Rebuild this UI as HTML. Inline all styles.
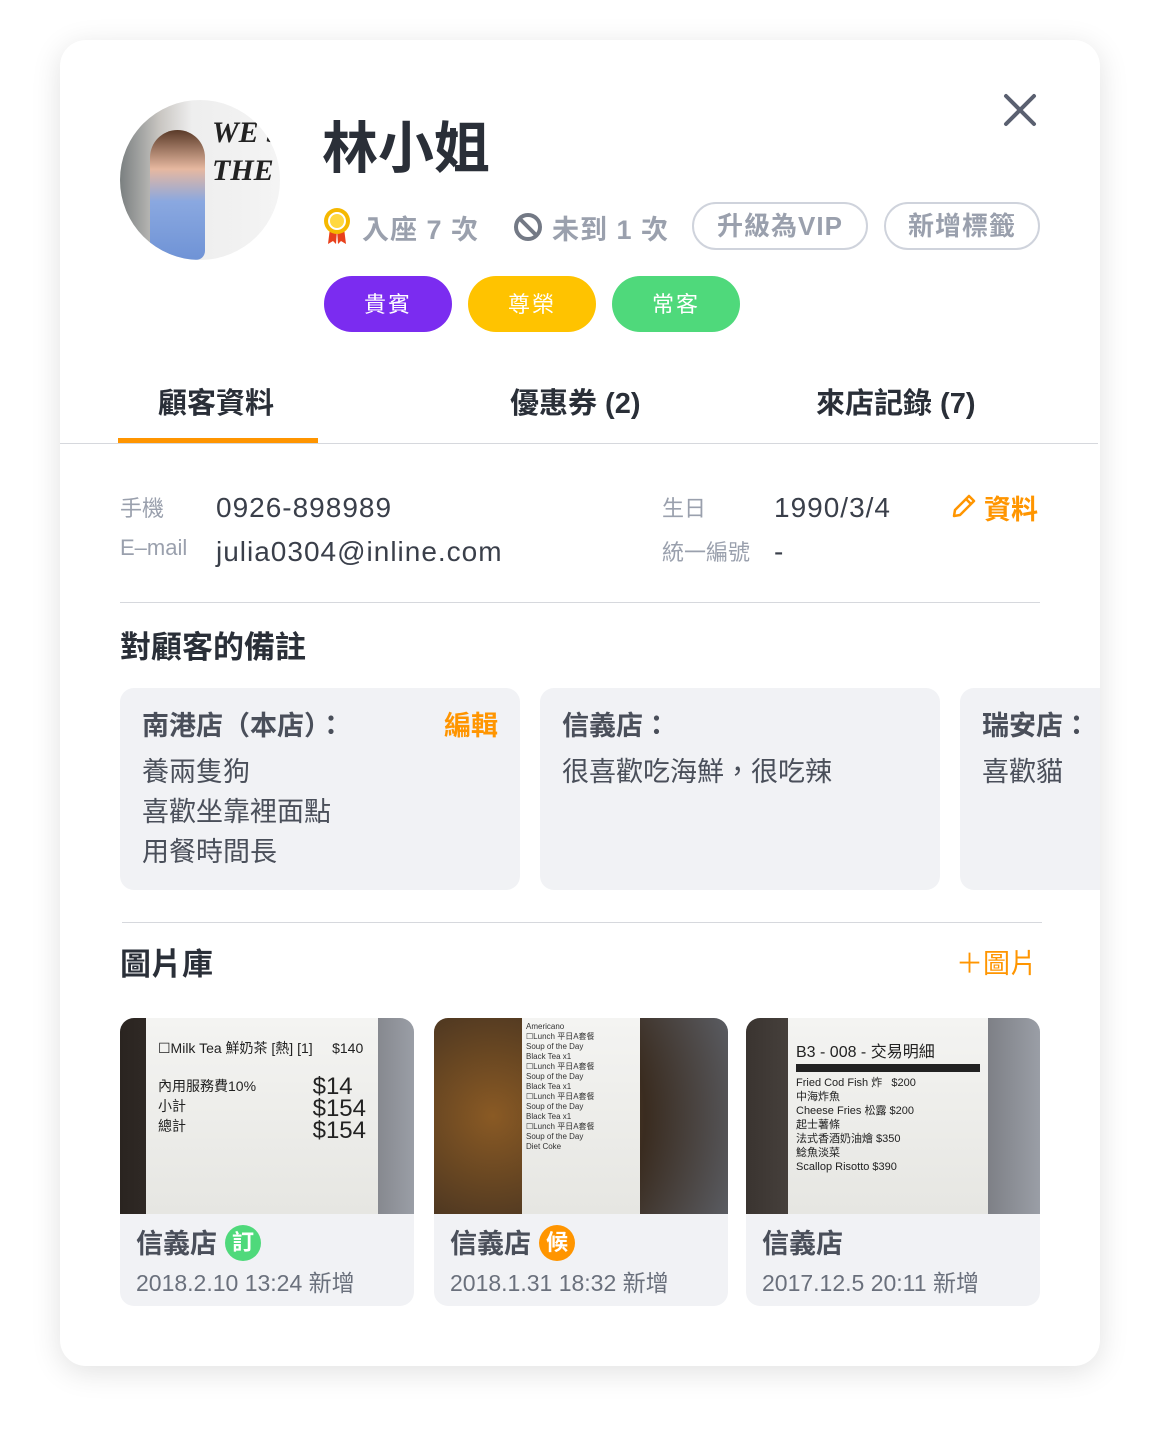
<!DOCTYPE html><html><head><meta charset="utf-8"><style>
*{margin:0;padding:0;box-sizing:border-box}
body{width:1160px;height:1446px;background:#fff;font-family:"Liberation Sans","Noto Sans CJK TC",sans-serif;position:relative;overflow:hidden;color:#2f3540}
.card{position:absolute;left:60px;top:40px;width:1040px;height:1326px;background:#fff;border-radius:26px;box-shadow:0 6px 30px rgba(0,0,0,.12);overflow:hidden}
.a{position:absolute;white-space:nowrap}
.tag{position:absolute;top:236px;height:56px;width:128px;border-radius:28px;color:#fff;font-size:22px;text-align:center;line-height:58px;letter-spacing:2px}
.pill{position:absolute;top:162px;height:48px;border:2px solid #cfd3dc;border-radius:24px;color:#9aa0ad;font-size:26px;line-height:44px;text-align:center;font-weight:bold;letter-spacing:1px}
.lbl{color:#9aa0ad;font-size:22px}
.val{font-size:28px;letter-spacing:1px;color:#3a3f4a}
.note{position:absolute;top:648px;width:400px;height:202px;background:#f1f2f5;border-radius:14px}
.note .h{position:absolute;left:22px;top:16px;font-size:27px;font-weight:bold;color:#4a4f5a}
.note .t{position:absolute;left:22px;top:64px;font-size:27px;line-height:40px;color:#4a4f5a}
.img{position:absolute;top:978px;width:294px;height:288px;background:#f1f2f5;border-radius:14px;overflow:hidden}
.ph{height:196px;position:relative}
.rc{position:absolute;top:0;bottom:0;background:linear-gradient(#f4f4f2,#e6e6e2)}
.cap1{position:absolute;left:16px;top:204px;font-size:27px;font-weight:bold;color:#4a4f5a}
.cap2{position:absolute;left:16px;top:246px;font-size:23px;color:#6a707c}
.bd{display:inline-block;width:36px;height:36px;border-radius:50%;color:#fff;font-size:22px;line-height:36px;text-align:center;vertical-align:3px;margin-left:8px}
</style></head><body>
<div class="card">
<div class="a" style="left:60px;top:60px;width:160px;height:160px;border-radius:50%;overflow:hidden;background:linear-gradient(90deg,#7a7f80 0%,#c9c6c2 25%,#eee 45%,#f4f4f4 100%)">
<div style="position:absolute;left:30px;top:30px;width:55px;height:130px;background:linear-gradient(#5a3a28 0,#e6b8a0 30%,#8aa8e0 55%,#6f93d6 100%);border-radius:30px 30px 10px 10px"></div>
<div style="position:absolute;left:92px;top:14px;font:bold italic 30px 'Liberation Serif';color:#222;line-height:38px">WE SE<br>THE BEST</div></div>
<div class="a" style="left:262px;top:64px;font-size:56px;font-weight:bold;color:#2a2f38">林小姐</div>
<svg class="a" style="left:942px;top:52px" width="36" height="36" viewBox="0 0 36 36"><path d="M4 4L32 32M32 4L4 32" stroke="#5a6070" stroke-width="4" stroke-linecap="round"/></svg>
<svg class="a" style="left:262px;top:166px" width="30" height="40" viewBox="0 0 30 40"><path d="M8 22L6 38L11 35L14 38L15 24Z M22 22L24 38L19 35L16 38L15 24Z" fill="#e8401c"/><circle cx="15" cy="15" r="13" fill="#f5b800"/><circle cx="15" cy="15" r="8" fill="#ffd840" stroke="#fff" stroke-width="2"/></svg>
<div class="a" style="left:302px;top:168px;font-size:27px;color:#9aa0ad;font-weight:bold;letter-spacing:1px">入座 7 次</div>
<svg class="a" style="left:453px;top:172px" width="30" height="30" viewBox="0 0 30 30"><circle cx="15" cy="15" r="12" fill="none" stroke="#737985" stroke-width="4"/><path d="M7 7L23 23" stroke="#737985" stroke-width="4"/></svg>
<div class="a" style="left:492px;top:168px;font-size:27px;color:#9aa0ad;font-weight:bold;letter-spacing:1px">未到 1 次</div>
<div class="pill" style="left:632px;width:176px">升級為VIP</div>
<div class="pill" style="left:824px;width:156px">新增標籤</div>
<div class="tag" style="left:264px;background:#7b2cf0">貴賓</div>
<div class="tag" style="left:408px;background:#ffc300">尊榮</div>
<div class="tag" style="left:552px;background:#4fd97b">常客</div>
<div class="a" style="left:98px;top:340px;font-size:29px;font-weight:bold;color:#2a2f38">顧客資料</div>
<div class="a" style="left:450px;top:340px;font-size:29px;font-weight:bold;color:#2a2f38">優惠券 (2)</div>
<div class="a" style="left:756px;top:340px;font-size:29px;font-weight:bold;color:#2a2f38">來店記錄 (7)</div>
<div class="a" style="left:58px;top:398px;width:200px;height:5px;background:#ff9500"></div>
<div class="a" style="left:0;top:403px;width:1038px;height:1px;background:#d6d8dd"></div>
<div class="a lbl" style="left:60px;top:451px">手機</div>
<div class="a val" style="left:156px;top:452px">0926-898989</div>
<div class="a lbl" style="left:60px;top:495px">E–mail</div>
<div class="a val" style="left:156px;top:496px">julia0304@inline.com</div>
<div class="a lbl" style="left:602px;top:451px">生日</div>
<div class="a val" style="left:714px;top:452px">1990/3/4</div>
<div class="a lbl" style="left:602px;top:495px">統一編號</div>
<div class="a val" style="left:714px;top:496px">-</div>
<svg class="a" style="left:890px;top:452px" width="28" height="28" viewBox="0 0 28 28"><path d="M4 24L5 18L19 4L24 9L10 23Z M16 7L21 12" fill="none" stroke="#ff9500" stroke-width="2.5" stroke-linejoin="round"/></svg>
<div class="a" style="left:924px;top:448px;font-size:27px;color:#ff9500;font-weight:bold">資料</div>
<div class="a" style="left:60px;top:562px;width:920px;height:1px;background:#d6d8dd"></div>
<div class="a" style="left:60px;top:582px;font-size:31px;font-weight:bold;color:#2a2f38">對顧客的備註</div>
<div class="note" style="left:60px"><div class="h">南港店（本店）：</div><div class="a" style="right:22px;top:16px;font-size:27px;font-weight:bold;color:#ff9500">編輯</div><div class="t">養兩隻狗<br>喜歡坐靠裡面點<br>用餐時間長</div></div>
<div class="note" style="left:480px"><div class="h">信義店：</div><div class="t">很喜歡吃海鮮，很吃辣</div></div>
<div class="note" style="left:900px"><div class="h">瑞安店：</div><div class="t">喜歡貓</div></div>
<div class="a" style="left:62px;top:882px;width:920px;height:1px;background:#d6d8dd"></div>
<div class="a" style="left:60px;top:899px;font-size:31px;font-weight:bold;color:#2a2f38">圖片庫</div>
<div class="a" style="left:896px;top:902px;font-size:27px;color:#ff9500">＋圖片</div>
<div class="img" style="left:60px"><div class="ph" style="background:linear-gradient(90deg,#2a2420,#3a3430 30%,#6a6a6e 70%,#9a9ea6)"><div class="rc" style="left:26px;right:36px;font-size:14px;color:#222;padding:20px 12px"><div>☐Milk Tea 鮮奶茶 [熱] [1] &nbsp; &nbsp; $140</div><div style="margin-top:18px;display:flex;justify-content:space-between"><span>內用服務費10%<br>小計<br>總計</span><span style="font-size:24px;line-height:22px">$14<br>$154<br>$154</span></div></div></div><div class="cap1">信義店<span class="bd" style="background:#4fd97b">訂</span></div><div class="cap2">2018.2.10 13:24 新增</div></div>
<div class="img" style="left:374px"><div class="ph" style="background:radial-gradient(circle at 20% 50%,#8a5a24,#3a2c20 60%,#5a5c62)"><div class="rc" style="left:88px;right:88px;font-size:8px;color:#333;padding:4px;line-height:10px">Americano<br>☐Lunch 平日A套餐<br>Soup of the Day<br>Black Tea x1<br>☐Lunch 平日A套餐<br>Soup of the Day<br>Black Tea x1<br>☐Lunch 平日A套餐<br>Soup of the Day<br>Black Tea x1<br>☐Lunch 平日A套餐<br>Soup of the Day<br>Diet Coke</div></div><div class="cap1">信義店<span class="bd" style="background:#ff9500">候</span></div><div class="cap2">2018.1.31 18:32 新增</div></div>
<div class="img" style="left:686px"><div class="ph" style="background:linear-gradient(90deg,#3a3430,#4a4440 20%,#7a7c82 80%,#9a9ea6)"><div class="rc" style="left:42px;right:52px;font-size:11px;color:#222;padding:28px 8px;line-height:14px"><div style="font-size:16px">B3 - 008 - 交易明細</div><div style="background:#222;height:8px;margin:4px 0"></div>Fried Cod Fish 炸 &nbsp; $200<br>中海炸魚<br>Cheese Fries 松露 $200<br>起士薯條<br>法式香酒奶油燴 $350<br>鯰魚淡菜<br>Scallop Risotto $390</div></div><div class="cap1">信義店</div><div class="cap2">2017.12.5 20:11 新增</div></div>
</div>
</body></html>
